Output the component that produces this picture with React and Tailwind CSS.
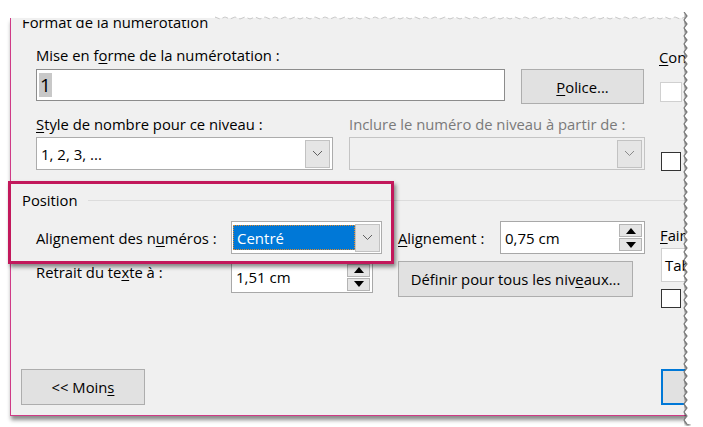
import React from "react";

const Chevron = ({ color = "#606060" }) => (
  <svg width="11" height="7" viewBox="0 0 11 7">
    <polyline points="1,1 5.5,5.5 10,1" fill="none" stroke={color} strokeWidth="1" />
  </svg>
);

const DropBtn = ({ disabled }) => (
  <div className="shrink-0 w-[25px] h-[28px] bg-[#e5e5e5] border border-[#c2c2c2] flex items-center justify-center">
    <Chevron color={disabled ? "#8a8a8a" : "#606060"} />
  </div>
);

const Spinner = () => (
  <div className="shrink-0 flex flex-col gap-[1px] w-[23px]">
    <div className="h-[13px] bg-[#e5e5e5] border border-[#b4b4b4] flex items-center justify-center">
      <svg width="10" height="6" viewBox="0 0 10 6"><polygon points="0,6 10,6 5,0" fill="#000" /></svg>
    </div>
    <div className="h-[13px] bg-[#e5e5e5] border border-[#b4b4b4] flex items-center justify-center">
      <svg width="10" height="6" viewBox="0 0 10 6"><polygon points="0,0 10,0 5,6" fill="#000" /></svg>
    </div>
  </div>
);

const Zigzag = () => {
  let d = "M 4 0";
  for (let y = 0; y <= 412; y += 4) {
    d += ` L ${y % 8 === 0 ? 4 : 7} ${y}`;
  }
  const fill = d + " L 23 412 L 23 0 Z";
  return (
    <svg width="23" height="414" viewBox="0 0 23 414" className="absolute left-[680px] top-[12px]">
      <defs>
        <filter id="sh" x="-50%" y="-5%" width="200%" height="110%">
          <feGaussianBlur stdDeviation="1.6" />
        </filter>
      </defs>
      <path d={d} fill="none" stroke="#222" strokeWidth="3.5" filter="url(#sh)" transform="translate(2,1)" />
      <path d={fill} fill="#fff" />
      <path d={d} fill="none" stroke="#7a7a7a" strokeWidth="1.2" />
    </svg>
  );
};

const TopEdge = () => {
  let d = "M 0 3";
  for (let x = 0; x <= 470; x += 5) {
    d += ` L ${x} ${x % 10 === 0 ? 2 : 4}`;
  }
  return (
    <svg width="470" height="6" viewBox="0 0 470 6" className="absolute left-[215px] top-[15px]">
      <path d={d} fill="none" stroke="#c8c8c8" strokeWidth="1" strokeDasharray="6 3" />
    </svg>
  );
};

export default function App() {
  return (
    <div className="relative w-[703px] h-[427px] bg-white overflow-hidden font-['Open_Sans','Noto_Sans',sans-serif] text-[14.8px] text-black leading-[18px]">
      <div className="absolute left-[10px] top-[18px] w-[676px] h-[398px] bg-[#f0f0f0] border-l border-b border-[#cf3a86] shadow-[1px_4px_4px_rgba(0,0,0,0.45)] overflow-hidden">
        {/* Format de la numérotation (torn at top) */}
        <div className="ml-[11px] mt-[2px] h-[8px] overflow-hidden">
          <div className="-mt-[7px] h-[18px] whitespace-nowrap">Format de la numérotation</div>
        </div>

        {/* Row 1 */}
        <div className="flex items-start mt-[17px]">
          <div className="shrink-0 ml-[25px] w-[469px]">
            <div className="h-[20px] flex items-center whitespace-nowrap">
              Mise en f<u className="underline-offset-2">o</u>rme de la numérotation :
            </div>
            <div className="mt-[4px] h-[32px] bg-white border border-[#8c8c8c] flex items-center pl-[2px]">
              <span className="bg-[#c8c8c8] text-[19px] leading-[24px] px-[1px]">1</span>
            </div>
          </div>
          <div className="shrink-0 ml-[16px] mt-[24px] w-[123px] h-[35px] bg-[#e1e1e1] border border-[#adadad] flex items-center justify-center">
            <span><u className="underline-offset-2">P</u>olice...</span>
          </div>
          <div className="shrink-0 ml-[15px] w-[80px]">
            <div className="mt-[3px] h-[18px] whitespace-nowrap"><u className="underline-offset-2">C</u>ontinuer</div>
            <div className="mt-[16px] ml-[1px] w-[22px] h-[20px] bg-white border border-[#d0d0d0]" />
          </div>
        </div>

        {/* Row 2 */}
        <div className="flex items-start mt-[10px]">
          <div className="shrink-0 ml-[25px] w-[297px]">
            <div className="h-[20px] flex items-center whitespace-nowrap">
              <u className="underline-offset-2">S</u>tyle de nombre pour ce niveau :
            </div>
            <div className="mt-[3px] h-[33px] bg-white border border-[#acacac] flex items-center justify-between pl-[4px] pr-[2px]">
              <span className="text-[15px]">1, 2, 3, ...</span>
              <DropBtn />
            </div>
          </div>
          <div className="shrink-0 ml-[16px] w-[296px]">
            <div className="h-[20px] flex items-center text-[#7a7a7a] whitespace-nowrap">
              Inclure le numéro de niveau à partir de :
            </div>
            <div className="mt-[3px] h-[33px] bg-[#f0f0f0] border border-[#c4c4c4] flex items-center justify-end pr-[2px]">
              <DropBtn disabled />
            </div>
          </div>
          <div className="shrink-0 ml-[16px] mt-[38px] w-[20px] h-[19px] bg-white border border-[#333]" />
        </div>

        {/* Position header */}
        <div className="flex items-center mt-[20px] h-[18px]">
          <span className="ml-[11px]">Position</span>
          <div className="ml-[10px] flex-1 h-px bg-[#dcdcdc]" />
        </div>

        {/* Rows 3-4 with right column */}
        <div className="flex items-start mt-[12px]">
          <div className="shrink-0 ml-[25px] w-[610px]">
            <div className="flex items-center h-[33px]">
              <div className="shrink-0 w-[195px] whitespace-nowrap">Alignement des n<u className="underline-offset-2">u</u>méros :</div>
              <div className="shrink-0 w-[151px] h-[33px] bg-white border border-[#acacac] flex items-center pl-[1px] pr-[1px]">
                <div className="w-[122px] h-[25px] bg-[#0078d7] border border-dotted border-[#e08a2c] text-white flex items-center pl-[3px] text-[15px]">
                  Centré
                </div>
                <DropBtn />
              </div>
              <div className="shrink-0 ml-[16px] w-[102px] whitespace-nowrap"><u className="underline-offset-2">A</u>lignement :</div>
              <div className="shrink-0 w-[145px] h-[33px] bg-white border border-[#a8a8a8] flex items-center justify-between pl-[4px] pr-[2px]">
                <span className="text-[15px]">0,75 cm</span>
                <Spinner />
              </div>
            </div>
            <div className="flex items-start mt-[7px]">
              <div className="shrink-0 w-[195px] mt-[2px] whitespace-nowrap">Retrait du te<u className="underline-offset-2">x</u>te à :</div>
              <div className="shrink-0 w-[142px] h-[32px] bg-white border border-[#a8a8a8] flex items-center justify-between pl-[4px] pr-[2px]">
                <span className="text-[15px]">1,51 cm</span>
                <Spinner />
              </div>
              <div className="shrink-0 ml-[25px] w-[235px] h-[36px] bg-[#e1e1e1] border border-[#adadad] flex items-center justify-center">
                <span className="whitespace-nowrap">Définir pour tous les niv<u className="underline-offset-2">e</u>aux...</span>
              </div>
            </div>
          </div>
          <div className="shrink-0 ml-[14px] w-[80px]">
            <div className="mt-[5px] h-[18px] whitespace-nowrap"><u className="underline-offset-2">F</u>aire suivre</div>
            <div className="mt-[4px] ml-[1px] h-[34px] bg-white border border-[#d0d0d0] flex items-center pl-[3px] text-[15px]">Tabulation</div>
            <div className="mt-[7px] ml-[1px] w-[20px] h-[19px] bg-white border border-[#333]" />
          </div>
        </div>

        {/* Bottom buttons */}
        <div className="flex items-start mt-[61px]">
          <div className="shrink-0 ml-[10px] w-[124px] h-[36px] bg-[#e1e1e1] border border-[#adadad] flex items-center justify-center">
            <span className="whitespace-nowrap">&lt;&lt; Moin<u className="underline-offset-2">s</u></span>
          </div>
          <div className="ml-[516px] shrink-0 w-[100px] h-[36px] bg-[#e1e1e1] border-2 border-[#0078d7]" />
        </div>
      </div>

      {/* highlight annotation */}
      <div className="absolute left-[8px] top-[181px] w-[386px] h-[83px] border-[3px] border-[#c2185b] shadow-[2px_3px_4px_rgba(0,0,0,0.45)]" />

      <TopEdge />
      <Zigzag />
    </div>
  );
}
